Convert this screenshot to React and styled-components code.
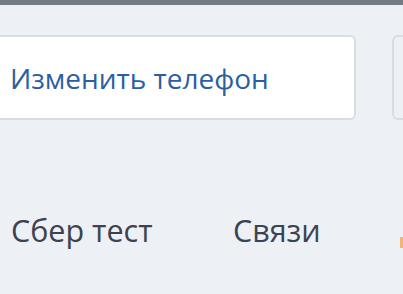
import React from "react";
import styled, { createGlobalStyle } from "styled-components";

const Global = createGlobalStyle`
  html, body { margin: 0; padding: 0; background: #edf0f4; overflow: hidden; }
  body { font-family: "Open Sans", "Noto Sans", sans-serif; }
`;

const Page = styled.div`
  width: 403px;
  height: 294px;
  overflow: hidden;
  display: flex;
  flex-direction: column;
`;

const TopBar = styled.div`
  height: 5px;
  background: #747b87;
  flex-shrink: 0;
`;

const CardRow = styled.div`
  display: flex;
  gap: 36px;
  margin-top: 30px;
  margin-left: -20px;
`;

const Card = styled.div`
  flex-shrink: 0;
  width: ${(p) => p.$w}px;
  height: 85px;
  box-sizing: border-box;
  background: ${(p) => (p.$blank ? "#edf0f4" : "#ffffff")};
  border: 2px solid #d9dce1;
  border-radius: 6px;
  display: flex;
  align-items: center;
  padding-left: 28px;
`;

const ActionText = styled.span`
  color: #2b5fa3;
  font-size: 28px;
  line-height: 1;
  white-space: nowrap;
`;

const LabelRow = styled.div`
  display: flex;
  align-items: flex-start;
  margin-top: 95px;
  padding-left: 11px;
`;

const Label = styled.span`
  color: #3c4350;
  font-size: 30.5px;
  line-height: 1;
  width: ${(p) => p.$w}px;
  flex-shrink: 0;
  white-space: nowrap;
`;

const Marker = styled.span`
  width: 4px;
  height: 11px;
  margin-top: 22px;
  background: #f1b676;
  flex-shrink: 0;
`;

export default function App() {
  return (
    <Page>
      <Global />
      <TopBar />
      <CardRow>
        <Card $w={376}>
          <ActionText>Изменить телефон</ActionText>
        </Card>
        <Card $w={120} $blank />
      </CardRow>
      <LabelRow>
        <Label $w={222}>Сбер тест</Label>
        <Label $w={167}>Связи</Label>
        <Marker />
      </LabelRow>
    </Page>
  );
}
